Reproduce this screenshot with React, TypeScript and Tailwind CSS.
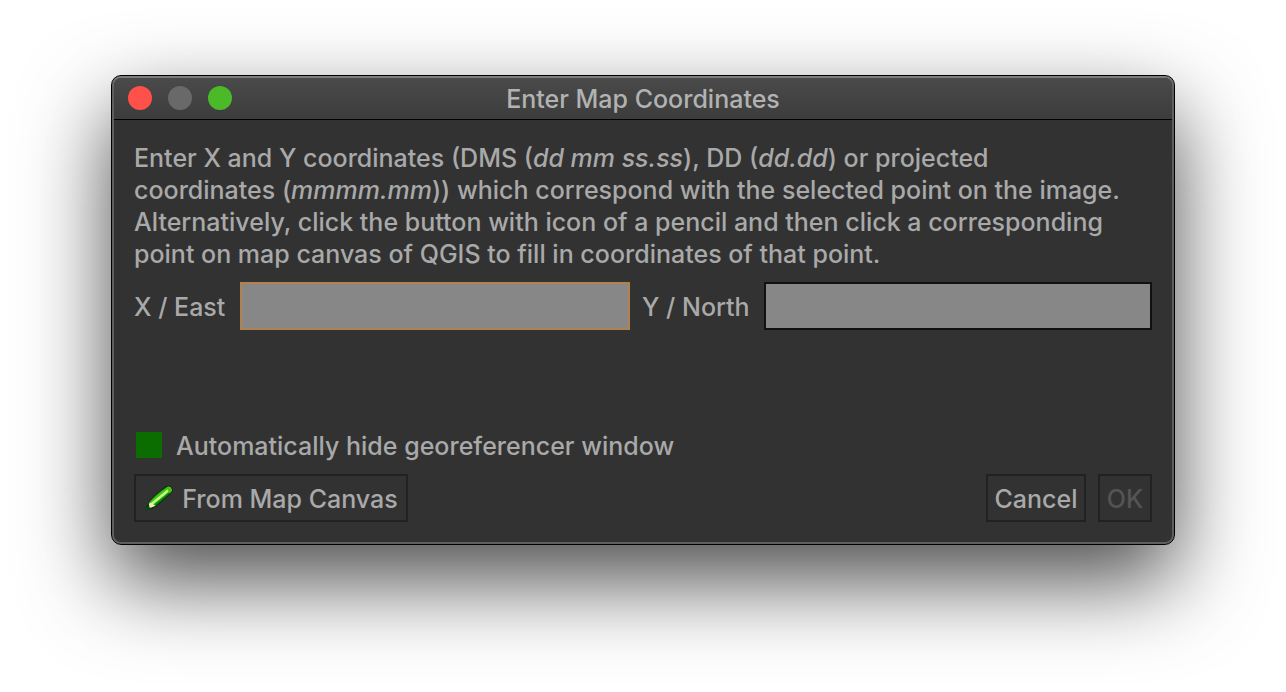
import { useState } from 'react';

function PencilIcon() {
  return (
    <svg width="32" height="32" viewBox="0 0 32 32" className="shrink-0" aria-hidden="true">
      <defs>
        <linearGradient id="pencil-body" x1="11.500" y1="9" x2="18.500" y2="17.500" gradientUnits="userSpaceOnUse">
          <stop offset="0" stopColor="#067a0a" />
          <stop offset="0.22" stopColor="#1fae0a" />
          <stop offset="0.48" stopColor="#52cc18" />
          <stop offset="0.56" stopColor="#d2fa9c" />
          <stop offset="0.7" stopColor="#bdf47c" />
          <stop offset="0.8" stopColor="#159c08" />
          <stop offset="1" stopColor="#066a05" />
        </linearGradient>
      </defs>
      <path
        d="M1 27.500 L4 20 Q11 10.500 22 3 Q24.500 1.800 26.500 3 L28.700 5.800 Q29.500 7.500 28.200 9.300 L13 23.300 Q8 26.800 1 27.500Z"
        fill="#07330f"
      />
      <path d="M4.800 20 Q12 11 23 4 Q24.800 3.100 26.100 4.200 L27.700 6.300 Q28.200 7.700 27.300 8.800 L12 22.700 L8.800 24Z" fill="url(#pencil-body)" />
      <path d="M22.500 4.400 Q24.800 3.100 26.100 4.200 L27.700 6.300 Q28.200 7.700 27.300 8.800 L25.500 10.400Z" fill="#50bd12" />
      <path d="M4.800 20.500 L7.500 20 L11.500 22.700 L5.500 25.300Z" fill="#f5e6b5" />
      <path d="M1 27.500 L3.800 23 L7 25.200Z" fill="#075413" />
    </svg>
  );
}

const buttonBase =
  'flex h-12 items-center justify-center border-2 border-[#222222] pt-0.5 leading-8';

export default function App() {
  const [east, setEast] = useState('');
  const [north, setNorth] = useState('');
  const [autoHide, setAutoHide] = useState(true);
  const ready = east !== '' && north !== '';

  return (
    <main className="min-h-screen overflow-hidden bg-white px-[111px] pt-[75px] font-['Inter',sans-serif] text-[25px] leading-8 font-medium text-[#a9a9a9]">
      <section
        role="dialog"
        aria-labelledby="dialog-title"
        className="overflow-hidden rounded-[10px] border border-black bg-linear-to-b from-[#808080] via-[#5e5e5e] via-[12px] to-[#5e5e5e] p-0.5 shadow-[0_36px_86px_rgba(0,0,0,0.7)]"
      >
        <div className="overflow-hidden rounded-[7px] bg-[#323232]">
          <header className="grid h-[42px] grid-cols-[1fr_auto_1fr] items-center border-b border-black bg-linear-to-b from-[#4a4a4a] to-[#3c3c3c] px-3.5 pb-px">
            <div className="flex gap-4">
              <button aria-label="Close" className="size-6 rounded-full bg-[#ff5049]" />
              <button aria-label="Minimize" className="size-6 rounded-full bg-[#696969]" />
              <button aria-label="Zoom" className="size-6 rounded-full bg-[#4bb928]" />
            </div>
            <h1 id="dialog-title" className="pt-px text-[#b2b2b2]">Enter Map Coordinates</h1>
          </header>

          <form className="px-5 pt-[22px] pb-5" onSubmit={(e) => e.preventDefault()}>
            <p className="whitespace-nowrap">
              Enter X and Y coordinates (DMS (<em>dd mm ss.ss</em>), DD (<em>dd.dd</em>) or projected
              <br />
              coordinates (<em>mmmm.mm</em>)) which correspond with the selected point on the image.
              <br />
              Alternatively, click the button with icon of a pencil and then click a corresponding
              <br />
              point on map canvas of QGIS to fill in coordinates of that point.
            </p>

            <div className="mt-3 grid grid-cols-[106px_390fr_12px_122px_388fr] items-center">
              <label htmlFor="east" className="pt-0.5">X / East</label>
              <input
                id="east"
                value={east}
                onChange={(e) => setEast(e.target.value)}
                className="h-12 w-full min-w-0 border-2 border-[#ae8350] bg-[#878787] px-2 text-black outline-none"
              />
              <label htmlFor="north" className="col-start-4 pt-0.5">Y / North</label>
              <input
                id="north"
                value={north}
                onChange={(e) => setNorth(e.target.value)}
                className="h-12 w-full min-w-0 border-2 border-[#111111] bg-[#878787] px-2 text-black outline-none"
              />
            </div>

            <div className="mt-[98px] ml-0.5 flex h-[34px] items-center gap-3.5">
              <input
                id="auto-hide"
                type="checkbox"
                checked={autoHide}
                onChange={(e) => setAutoHide(e.target.checked)}
                className="size-[26px] appearance-none bg-[#222222] checked:bg-[#0b6d00]"
              />
              <label htmlFor="auto-hide" className="pt-0.5">Automatically hide georeferencer window</label>
            </div>

            <div className="mt-3 flex gap-3">
              <button type="button" className={`${buttonBase} mr-auto w-[274px] gap-1.5`}>
                <PencilIcon />
                From Map Canvas
              </button>
              <button type="button" className={`${buttonBase} w-[100px]`}>Cancel</button>
              <button type="submit" disabled={!ready} className={`${buttonBase} w-[54px] disabled:text-[#545454]`}>
                OK
              </button>
            </div>
          </form>
        </div>
      </section>
    </main>
  );
}
